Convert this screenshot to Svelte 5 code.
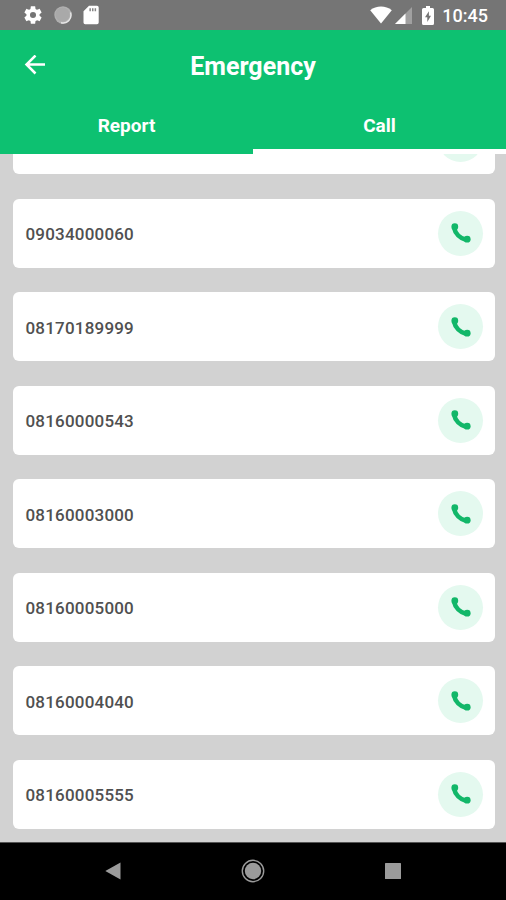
<script lang="ts">
	type Tab = 'Report' | 'Call';

	const tabs: Tab[] = ['Report', 'Call'];
	let activeTab = $state<Tab>('Call');

	// The first entry is mostly scrolled under the header
	const contacts = [
		'',
		'09034000060',
		'08170189999',
		'08160000543',
		'08160003000',
		'08160005000',
		'08160004040',
		'08160005555'
	];
</script>

<div class="screen">
	<div class="status-bar">
		<div class="status-left">
			<svg width="22" height="22" viewBox="0 0 24 24" fill="#fff">
				<path d="M19.14 12.94c.04-.3.06-.61.06-.94 0-.32-.02-.64-.07-.94l2.03-1.58c.18-.14.23-.41.12-.61l-1.92-3.32c-.12-.22-.37-.29-.59-.22l-2.39.96c-.5-.38-1.03-.7-1.62-.94l-.36-2.54c-.04-.24-.24-.41-.48-.41h-3.84c-.24 0-.43.17-.47.41l-.36 2.54c-.59.24-1.13.57-1.62.94l-2.39-.96c-.22-.08-.47 0-.59.22L2.74 8.87c-.12.21-.08.47.12.61l2.03 1.58c-.05.3-.09.63-.09.94s.02.64.07.94l-2.03 1.58c-.18.14-.23.41-.12.61l1.92 3.32c.12.22.37.29.59.22l2.39-.96c.5.38 1.03.7 1.62.94l.36 2.54c.05.24.24.41.48.41h3.84c.24 0 .44-.17.47-.41l.36-2.54c.59-.24 1.13-.56 1.62-.94l2.39.96c.22.08.47 0 .59-.22l1.92-3.32c.12-.22.07-.47-.12-.61l-2.01-1.58zM12 15.3a3.3 3.3 0 1 1 0-6.6 3.3 3.3 0 0 1 0 6.6z" />
			</svg>
			<svg width="18" height="18" viewBox="0 0 18 18">
				<circle cx="9" cy="9" r="8.7" fill="#b0b0b0" />
				<circle cx="8.5" cy="8.5" r="7" fill="#a9a9a9" />
				<path d="M16.5 6.5A8 8 0 0 1 7 16.8" fill="none" stroke="#e6e6e6" stroke-width="1.4" />
			</svg>
			<svg width="16" height="20" viewBox="0 0 16 20">
				<path d="M6 .8h8a1.7 1.7 0 0 1 1.7 1.7v15a1.7 1.7 0 0 1-1.7 1.7H2.2a1.7 1.7 0 0 1-1.7-1.7V6.3z" fill="#fff" />
				<path d="M6.4 3.2h1.5v3H6.4zM9 3.2h1.5v3H9zM11.6 3.2h1.5v3h-1.5z" fill="#858585" />
			</svg>
		</div>
		<div class="status-right">
			<svg width="22" height="18" viewBox="0 0 22 18">
				<path d="M11 17.5.2 4.2C3.3 1.7 7 .5 11 .5s7.7 1.2 10.8 3.7z" fill="#fff" />
			</svg>
			<svg width="17" height="17" viewBox="0 0 17 17">
				<path d="M17 0v17H0z" fill="#a0a0a0" />
				<path d="M10.5 6.5V17H0z" fill="#fff" />
			</svg>
			<svg class="battery" width="12" height="19" viewBox="0 0 12 19">
				<path d="M4 0h4v2h2.5A1.5 1.5 0 0 1 12 3.5v14a1.5 1.5 0 0 1-1.5 1.5h-9A1.5 1.5 0 0 1 0 17.5v-14A1.5 1.5 0 0 1 1.5 2H4z" fill="#fff" />
				<path d="M6.9 5.2 3 11.3h2.3V16L9 9.8H6.9z" fill="#757575" />
			</svg>
			<span class="clock">10:45</span>
		</div>
	</div>

	<header>
		<div class="title-row">
			<button type="button" class="back" aria-label="Back">
				<svg width="22" height="20" viewBox="0 0 22 20" fill="none" stroke="#fff" stroke-width="2.5">
					<path d="M21 9.5H2.500M11.500 .5 2.500 9.500l9 9" />
				</svg>
			</button>
			<h1>Emergency</h1>
		</div>
		<nav class="tabs">
			{#each tabs as tab}
				<button
					type="button"
					class="tab"
					class:active={tab === activeTab}
					onclick={() => (activeTab = tab)}
				>
					{tab}
				</button>
			{/each}
		</nav>
	</header>

	<main>
		{#each contacts as phone}
			<div class="card">
				<span class="number">{phone}</span>
				<button type="button" class="call" aria-label="Call">
					<svg width="20" height="20" viewBox="0 0 20 20" fill="#12b769">
						<path d="M3 4.500C4.200 10.500 9 15.500 15.500 17" fill="none" stroke="#12b769" stroke-width="4.600" />
						<circle cx="3.800" cy="3.700" r="3.400" />
						<circle cx="16.200" cy="16.200" r="3.400" />
					</svg>
				</button>
			</div>
		{/each}
	</main>

	<footer>
		<svg width="16" height="18" viewBox="0 0 16 18">
			<path d="M15.5.5v17L.3 9z" fill="#9b9b9b" />
		</svg>
		<svg width="24" height="24" viewBox="0 0 24 24">
			<circle cx="12" cy="12" r="10.7" fill="none" stroke="#9b9b9b" stroke-width="1.4" />
			<circle cx="12" cy="12" r="8.2" fill="#9b9b9b" />
		</svg>
		<svg width="16" height="16" viewBox="0 0 16 16">
			<rect width="16" height="16" rx="0.5" fill="#9b9b9b" />
		</svg>
	</footer>
</div>

<style>
	:global(body) {
		margin: 0;
	}

	.screen {
		display: flex;
		flex-direction: column;
		width: 506px;
		height: 900px;
		overflow: hidden;
		background: #d2d2d2;
		font-family: Roboto, sans-serif;
	}

	svg {
		display: block;
		flex-shrink: 0;
	}

	button {
		padding: 0;
		border: 0;
		background: none;
		font: inherit;
		cursor: pointer;
	}

	.status-bar {
		display: flex;
		flex-shrink: 0;
		align-items: center;
		justify-content: space-between;
		box-sizing: border-box;
		height: 30px;
		padding: 0 18px 0 21.5px;
		background: #757575;
	}

	.status-left,
	.status-right {
		display: flex;
		align-items: center;
	}

	.status-left {
		gap: 10.5px;
	}

	.status-right {
		gap: 3px;
	}

	.battery {
		margin: 0 5px 0 7px;
	}

	.clock {
		padding-top: 2px;
		color: #fff;
		font-size: 18px;
		font-weight: 500;
		line-height: 30px;
	}

	header {
		flex-shrink: 0;
		height: 123.5px;
		background: #0dc171;
		color: #fff;
	}

	.title-row {
		display: grid;
		grid-template-columns: 70px 1fr 70px;
		align-items: center;
		height: 70px;
	}

	.back {
		padding-left: 24px;
	}

	h1 {
		margin: 0;
		padding-top: 3px;
		font-size: 25px;
		font-weight: 700;
		line-height: 30px;
		text-align: center;
	}

	.tabs {
		display: flex;
		height: 53.5px;
	}

	.tab {
		flex: 1;
		box-sizing: border-box;
		border-bottom: 5px solid transparent;
		padding-top: 2px;
		color: #fff;
		font-size: 19px;
		font-weight: 700;
	}

	.tab.active {
		border-bottom-color: #fff;
	}

	main {
		display: flex;
		flex: 1;
		flex-direction: column;
		justify-content: flex-end;
		gap: 24.5px;
		min-height: 0;
		padding: 0 11px 12.6px 13px;
		overflow: hidden;
	}

	.card {
		display: flex;
		flex-shrink: 0;
		align-items: center;
		justify-content: space-between;
		box-sizing: border-box;
		height: 69px;
		padding: 0 12px 0 12.5px;
		border-radius: 6px;
		background: #fff;
	}

	.number {
		padding-top: 2px;
		color: #505050;
		font-size: 17px;
		font-weight: 500;
		letter-spacing: 0.2px;
	}

	.call {
		display: flex;
		align-items: center;
		justify-content: center;
		width: 45px;
		height: 45px;
		border-radius: 50%;
		background: #e4f9ef;
	}

	footer {
		display: flex;
		flex-shrink: 0;
		align-items: center;
		justify-content: center;
		gap: 120px;
		box-sizing: border-box;
		height: 58.5px;
		border-top: 1px solid #555;
		background: #000;
	}
</style>
